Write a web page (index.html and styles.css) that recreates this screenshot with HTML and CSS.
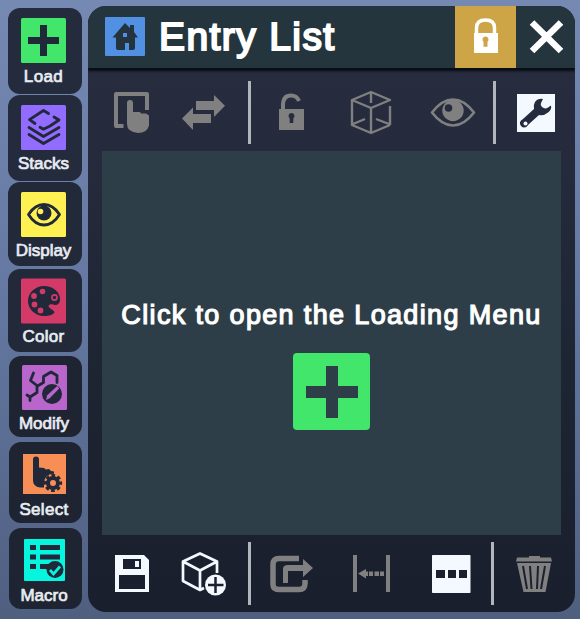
FILE: index.html
```html
<!DOCTYPE html>
<html lang="en">
<head>
<meta charset="utf-8">
<title>Entry List</title>
<link rel="stylesheet" href="styles.css">
</head>
<body>
<nav class="sidebar">
  <button class="tab load">
    <svg viewBox="21 18 45 45"><rect class="tile" x="21" y="18" width="45" height="45" rx="1.5"/><path class="ink" d="M40 25h7v12h12v7H47v12h-7V44H28v-7h12z"/></svg>
    <span>Load</span>
  </button>
  <button class="tab stacks">
    <svg viewBox="21 105 45 45"><rect class="tile" x="21" y="105" width="45" height="45" rx="1.5"/><g class="line"><path d="M35 123.500l-5.500-3.800L43.500 110.500l5 3M54 117l5 3-9 6-6.500 3.200-3.500-2"/><path d="M29 127.500l14.500 9 15.500-9M29 134.500l14.500 9 15.500-9"/></g></svg>
    <span>Stacks</span>
  </button>
  <button class="tab display">
    <svg viewBox="21 192 45 45"><rect class="tile" x="21" y="192" width="45" height="45" rx="1.500"/><path class="line" d="M28.500 214.500Q35 204.500 44 204.500T59.500 214.500Q53 225 44 225T28.500 214.500z"/><circle class="ink" cx="44" cy="213" r="7.500"/><circle class="tile" cx="40.500" cy="211.500" r="2.800"/></svg>
    <span>Display</span>
  </button>
  <button class="tab color">
    <svg viewBox="21 278 45 46"><rect class="tile" x="21" y="278.500" width="45" height="45" rx="1.500"/><path class="ink" d="M44 286c9 0 16 6 16 13 0 4-2 6-5 6-3-1-6-1-6.500 1 0 2 5 4 6 6-1 3-6 4-10.500 4-9 0-16-7-16-15s7-15 16-15z"/><g class="tile"><circle cx="42.500" cy="291.500" r="2.800"/><circle cx="34" cy="296" r="2.900"/><circle cx="34.500" cy="304.500" r="2.900"/><circle cx="40.500" cy="310.500" r="2.900"/><circle cx="54.500" cy="297.500" r="3.400"/></g><circle class="ink" cx="54.500" cy="297.500" r="1.700"/></svg>
    <span>Color</span>
  </button>
  <button class="tab modify">
    <svg viewBox="22 365 45 45"><rect class="tile" x="22" y="365" width="45" height="45" rx="1.500"/><path class="line" d="M33.500 373l-3 7.500 7 5.500 6-3.500v-6l7.500-4.500 6 3.500v7M37 386v6.500l-7 4.500-3-2M30 397v3.500"/><circle class="ink" cx="52" cy="394" r="10"/><path class="tile" d="M46 400l1.200-4.700 10-9.200 2 2.300-9.500 9.800z"/></svg>
    <span>Modify</span>
  </button>
  <button class="tab select">
    <svg viewBox="23 454 43 40"><rect class="tile" x="23" y="454" width="43" height="40"/><path class="ink" d="M33 459.500q0-3 3-3t3 3v8l5 .5 2 1.500 3-.5 2 2 3 .5v3l-5 3-5 5v5h-4q-7-1-7-7z"/><circle class="tile" cx="53" cy="483" r="9.200"/><circle cx="53" cy="483" r="5" fill="none" stroke="#20283a" stroke-width="4"/><circle cx="53" cy="483" r="7.600" fill="none" stroke="#20283a" stroke-width="3" stroke-dasharray="3.500 2.470" stroke-dashoffset="1.750"/></svg>
    <span>Select</span>
  </button>
  <button class="tab macro">
    <svg viewBox="24 539 41 42"><rect class="tile" x="24" y="539" width="41" height="42" rx="1"/><path class="ink" d="M30 545h6v5h-6zM30 554.500h6v5h-6zM30 564h6v5h-6zM40 545h20v5H40zM40 554.500h20v5H40zM40 564h10v5H40z"/><circle class="ink" cx="55" cy="569.500" r="8.500"/><path d="M50 570l3.500 4 6.500-7.500" fill="none" stroke="#05f5df" stroke-width="2.700"/></svg>
    <span>Macro</span>
  </button>
</nav>

<main class="panel">
  <header class="header">
    <svg class="home" viewBox="105 17 40 39"><rect x="105" y="17" width="40" height="39" rx="1" fill="#5190e2"/><path fill="#24343e" d="M125 23l5 5v-3h4v7l4 5.500h-3V48q0 2-2 2h-4v-7h-4v7h-6q-3 0-3-2V37.500h-3.500z"/><path fill="#5190e2" d="M123 33h4v4h-4z"/></svg>
    <h1>Entry List</h1>
    <button class="lock"><svg viewBox="455 6 61 62"><path d="M476.500 34v-6q0-8 9-8t9 8v6" fill="none" stroke="#fff" stroke-width="3.500"/><path fill="#fff" d="M474 33h24v20h-24z"/><path fill="#cda446" d="M485.500 36.500a3 3 0 0 1 2 5.300v5h-4v-5a3 3 0 0 1 2-5.300z"/></svg></button>
    <button class="close"><svg viewBox="516 6 59 62"><path d="M532 22.500l29 28.500M561 22.500L532 51" stroke="#fff" stroke-width="6.500"/></svg></button>
  </header>

  <div class="toolbar top">
    <button><svg viewBox="96 80 72 64"><path class="gs" d="M123.500 126H116V94h31v16" stroke-width="4"/><path class="gf" d="M127 103q0-3 3-3t3 3v9h7l1 1.500h5l3 2v10q-2 7.500-11 7.500-11-1-11-9z"/></svg></button>
    <button><svg viewBox="168 80 72 64"><path class="gf" d="M196 101h18v-6l11 10.700L214 117v-7h-18zM211 114h-18v-6.500l-11 11 11 11.500v-7h18z"/></svg></button>
    <i></i>
    <button><svg viewBox="259 80 64 64"><path class="gs" d="M283 110v-5q0-9.500 8-9.500 6 0 8 5.500" stroke-width="4"/><path class="gf" d="M279 109h25v21h-25z"/><path fill="#252c3d" d="M291.500 113a3 3 0 0 1 1.800 5.400v4.600h-3.600v-4.600a3 3 0 0 1 1.800-5.400z"/></svg></button>
    <button><svg viewBox="323 80 96 64"><path class="gs" d="M352 100l19-8 19 8-19 8zM352 100v25l19 8 19-8M390 106v19M371 108v25M371 92v11M353 124l12-5M389 124l-13-5" stroke-width="2.400"/></svg></button>
    <button><svg viewBox="419 80 68 64"><path class="gs" d="M432 112.500Q442 99.500 453 99.500T474 112.500Q464 125.500 453 125.500T432 112.500z" stroke-width="2.700"/><circle class="gf" cx="453" cy="110.500" r="10.700"/><circle cx="448.500" cy="108" r="3.800" fill="#252c3d"/></svg></button>
    <i></i>
    <button><svg viewBox="502 80 68 64"><path fill="#f4f8ff" d="M517 94h38v38h-38z"/><path fill="#252c3d" d="M543 99q-5-1-8 3-2 3-1 7l-11 10q-5 3-2 7 4 4 8-2l10-9q5 1 9-2.500 4-3 3-7l-3 2q-3 2-6-.5-2-2-1-4z"/><circle cx="525.500" cy="123.500" r="2" fill="#f4f8ff"/></svg></button>
  </div>

  <section class="content">
    <p>Click to open the Loading Menu</p>
    <button class="add"><svg viewBox="0 0 77 77"><path fill="#2e3e48" d="M33 13h12v20h20v12H45v20H33V45H13V33h20z"/></svg></button>
  </section>

  <div class="toolbar bottom">
    <button><svg viewBox="96 542 72 64"><path fill="#f4f8ff" fill-rule="evenodd" d="M115 555h29l5 5v32h-34zM123 559v10h18v-10zM119 575v14h26v-14z"/><path fill="#f4f8ff" d="M135 561h4v6h-4z"/></svg></button>
    <button><svg viewBox="168 542 72 64"><path d="M183 561.500l17-8 17 8-17 9zM183 561.500v19.500l17 9M217 561v12M200 570v20l4-2" fill="none" stroke="#f4f8ff" stroke-width="2.700" stroke-linejoin="round"/><circle cx="215.500" cy="585" r="10.500" fill="#f4f8ff"/><path d="M215.500 577v16M208 585h15.500" stroke="#1b202e" stroke-width="2.500"/></svg></button>
    <i></i>
    <button><svg viewBox="259 542 64 64"><path class="gs" d="M299 558.500h-20q-6 0-6 6v20q0 5 6 5h20q6 0 6-6v-3.500" stroke-width="5.500"/><path class="gf" d="M283 583v-14q0-4 5-4h15v-6l10 9-10 9v-6h-15v12z"/></svg></button>
    <button><svg viewBox="323 542 94 64"><path class="gf" d="M353 555h4v37h-4zM386 555h4v37h-4zM358 573.500l8-4.500v2.500h2v4.500h-2v2.500zM369 571.500h4v4.500h-4zM374.500 571.500h4.500v4.500h-4.500zM380 571.500h4v4.500h-4z"/></svg></button>
    <button><svg viewBox="417 542 68 64"><rect x="432" y="555" width="38.500" height="38" rx=".8" fill="#f4f8ff"/><path fill="#1b202e" d="M436 570h9v8h-9zM448 570h8v8h-8zM459 570h8v8h-8z"/></svg></button>
    <i></i>
    <button><svg viewBox="500 542 68 64"><path class="gf" d="M529 556h11v1.500h11l1 4h-36l1-4h12zM517 563h34l-5.500 29h-22z"/><path d="M523 566l4 23M530 566l1.500 23M538 566l-1 23M545 566l-4 23" stroke="#1b202e" stroke-width="2"/></svg></button>
  </div>
</main>
</body>
</html>
```

FILE: styles.css
```css
* { box-sizing: border-box; }

body {
  margin: 0;
  width: 580px;
  height: 619px;
  overflow: hidden;
  display: flex;
  align-items: flex-start;
  gap: 6px;
  padding: 6px 5px 0 8px;
  background: linear-gradient(#7589b3, #6377a0 50%, #4f5f80);
  font-family: "Liberation Sans", Arial, sans-serif;
  color: #fff;
}

button {
  border: 0;
  padding: 0;
  margin: 0;
  background: none;
  color: inherit;
  font: inherit;
}

svg { display: block; }

.sidebar {
  width: 74px;
  flex: none;
  padding-top: 2px;
  display: grid;
  grid-template-rows: 87px 87px 87px 87px 86px 86px 81px;
}

.tab {
  display: flex;
  flex-direction: column;
  align-items: center;
  width: 74px;
  height: 86px;
  padding: 10px 3px 0 0;
  border-radius: 12px;
  background: #242b3d;
  color: #e9ecf2;
}

.tab svg { width: 45px; height: 45px; flex: none; }

.tab span {
  margin-top: 4px;
  font-size: 17px;
  line-height: 20px;
  -webkit-text-stroke: 0.7px currentColor;
}

.display { height: 84px; }
.color { height: 83px; }
.modify, .select, .macro { height: 81px; margin-left: 1px; width: 73px; }
.display, .color { background: #222939; }
.modify, .select, .macro { background: #1e2431; }
.color svg { height: 46px; margin-top: -1px; }
.color span { margin-top: 3px; letter-spacing: 0.3px; }
.load span { letter-spacing: 0.4px; }
.modify, .select, .macro { padding-top: 9px; }
.select svg { width: 43px; height: 40px; margin-top: 3px; }
.select span { margin-top: 6px; letter-spacing: 0.3px; }
.macro svg { width: 41px; height: 42px; margin-top: 2px; }
.macro span { margin-top: 5px; }

.ink { fill: #20283a; }
.line { fill: none; stroke: #20283a; stroke-width: 2.8; stroke-linejoin: round; stroke-linecap: round; }
.load .tile { fill: #41e66a; }
.stacks .tile { fill: #926bff; }
.display .tile { fill: #fff152; }
.color .tile { fill: #d33a68; }
.modify .tile { fill: #b865cc; }
.select .tile { fill: #f68e55; }
.macro .tile { fill: #05f5df; }

.panel {
  width: 487px;
  height: 606px;
  flex: none;
  border-radius: 18px;
  overflow: hidden;
  display: flex;
  flex-direction: column;
  background: linear-gradient(#282c40, #252b3c 25%, #1d2432 60%, #1a1f2d);
}

.header {
  height: 61.5px;
  flex: none;
  display: flex;
  align-items: flex-start;
  padding-left: 17px;
  background: #24353e;
  box-shadow: 0 3px 2px #090c14;
}

.home { width: 40px; height: 39px; margin-top: 11px; flex: none; }

h1 {
  flex: 1;
  margin: 8px 0 0 14px;
  font-size: 39px;
  line-height: 46px;
  font-weight: 400;
  letter-spacing: 1.4px;
  -webkit-text-stroke: 2px #fff;
  white-space: nowrap;
}

.lock { width: 61px; height: 62px; background: #cda446; }
.close { width: 59px; height: 62px; }

.toolbar {
  display: grid;
  height: 64px;
  flex: none;
  padding-left: 8px;
}

.toolbar i { width: 3px; height: 63px; margin-top: 1px; justify-self: center; background: #b2b6ba; }
.toolbar svg { width: 100%; height: 64px; }
.top { grid-template-columns: 72px 72px 19px 64px 96px 68px 15px 68px; margin-top: 12.500px; }
.bottom { grid-template-columns: 72px 72px 19px 64px 94px 68px 15px 68px; margin-top: 7px; }
.bottom i { margin-top: 0; }

.gf { fill: #808080; }
.gs { fill: none; stroke: #808080; stroke-linejoin: round; }

.content {
  height: 384px;
  flex: none;
  margin: 7px 14px 0;
  background: #2e3e48;
  display: flex;
  flex-direction: column;
  align-items: center;
}

.content p {
  margin: 148px 0 0;
  font-size: 27px;
  line-height: 32px;
  letter-spacing: 1.35px;
  white-space: nowrap;
  -webkit-text-stroke: 1.2px #fff;
}

.add { width: 77px; height: 77px; margin-top: 22px; border-radius: 4px; background: #41e66a; }
```
